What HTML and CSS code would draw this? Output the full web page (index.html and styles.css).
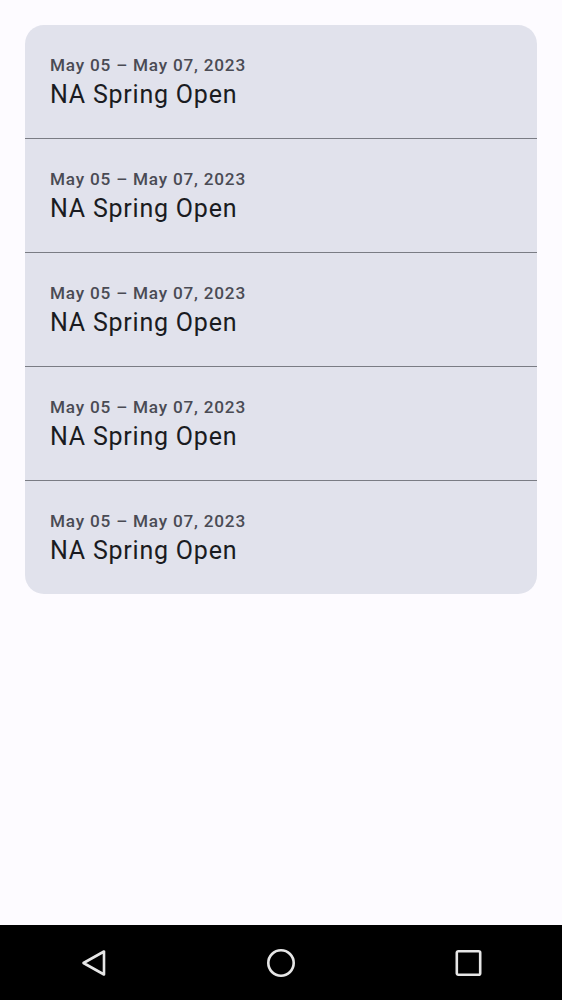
FILE: index.html
```html
<!DOCTYPE html>
<html lang="en">
<head>
<meta charset="utf-8">
<title>Tournaments</title>
<link rel="stylesheet" href="styles.css">
</head>
<body>
<div class="screen">
  <main class="content">
    <section class="card">
      <div class="item">
        <div class="date">May 05 – May 07, 2023</div>
        <div class="title">NA Spring Open</div>
      </div>
      <div class="divider"></div>
      <div class="item">
        <div class="date">May 05 – May 07, 2023</div>
        <div class="title">NA Spring Open</div>
      </div>
      <div class="divider"></div>
      <div class="item">
        <div class="date">May 05 – May 07, 2023</div>
        <div class="title">NA Spring Open</div>
      </div>
      <div class="divider"></div>
      <div class="item">
        <div class="date">May 05 – May 07, 2023</div>
        <div class="title">NA Spring Open</div>
      </div>
      <div class="divider"></div>
      <div class="item">
        <div class="date">May 05 – May 07, 2023</div>
        <div class="title">NA Spring Open</div>
      </div>
    </section>
  </main>
  <nav class="navbar">
    <svg class="nav-icon" width="30" height="30" viewBox="0 0 30 30" aria-label="Back">
      <path d="M25 3.5 L25 26.5 L4.5 15 Z" fill="none" stroke="#e6e6e6" stroke-width="2.6" stroke-linejoin="round"/>
    </svg>
    <svg class="nav-icon" width="30" height="30" viewBox="0 0 30 30" aria-label="Home">
      <circle cx="15" cy="15" r="12.7" fill="none" stroke="#e6e6e6" stroke-width="2.6"/>
    </svg>
    <svg class="nav-icon" width="30" height="30" viewBox="0 0 30 30" aria-label="Recents">
      <rect x="3.8" y="3.3" width="23.4" height="23.4" rx="1.5" fill="none" stroke="#e6e6e6" stroke-width="2.6"/>
    </svg>
  </nav>
</div>
</body>
</html>
```

FILE: styles.css
```css
* {
  box-sizing: border-box;
}

html, body {
  margin: 0;
  padding: 0;
}

body {
  background: #fdfbff;
  font-family: Roboto, "Noto Sans", "Liberation Sans", sans-serif;
}

.screen {
  display: flex;
  flex-direction: column;
  height: 1000px;
}

.content {
  flex: 1;
  padding: 25px 25px 0 25px;
}

.card {
  background: #e1e2ec;
  border-radius: 19px;
  overflow: hidden;
  display: flex;
  flex-direction: column;
}

.item {
  height: 112.5px;
  padding: 29px 24px 0 25px;
  display: flex;
  flex-direction: column;
}

.date {
  font-size: 17.2px;
  line-height: 22px;
  font-weight: 500;
  letter-spacing: 0.78px;
  color: #4a4b54;
}

.title {
  font-size: 25px;
  line-height: 37.5px;
  font-weight: 400;
  letter-spacing: 0.78px;
  color: #1a1b21;
}

.divider {
  height: 1.56px;
  background: #7a7c84;
}

.navbar {
  height: 75px;
  background: #000;
  display: flex;
  align-items: center;
  justify-content: space-between;
  padding: 0 79px;
}

.nav-icon {
  display: block;
}
```
